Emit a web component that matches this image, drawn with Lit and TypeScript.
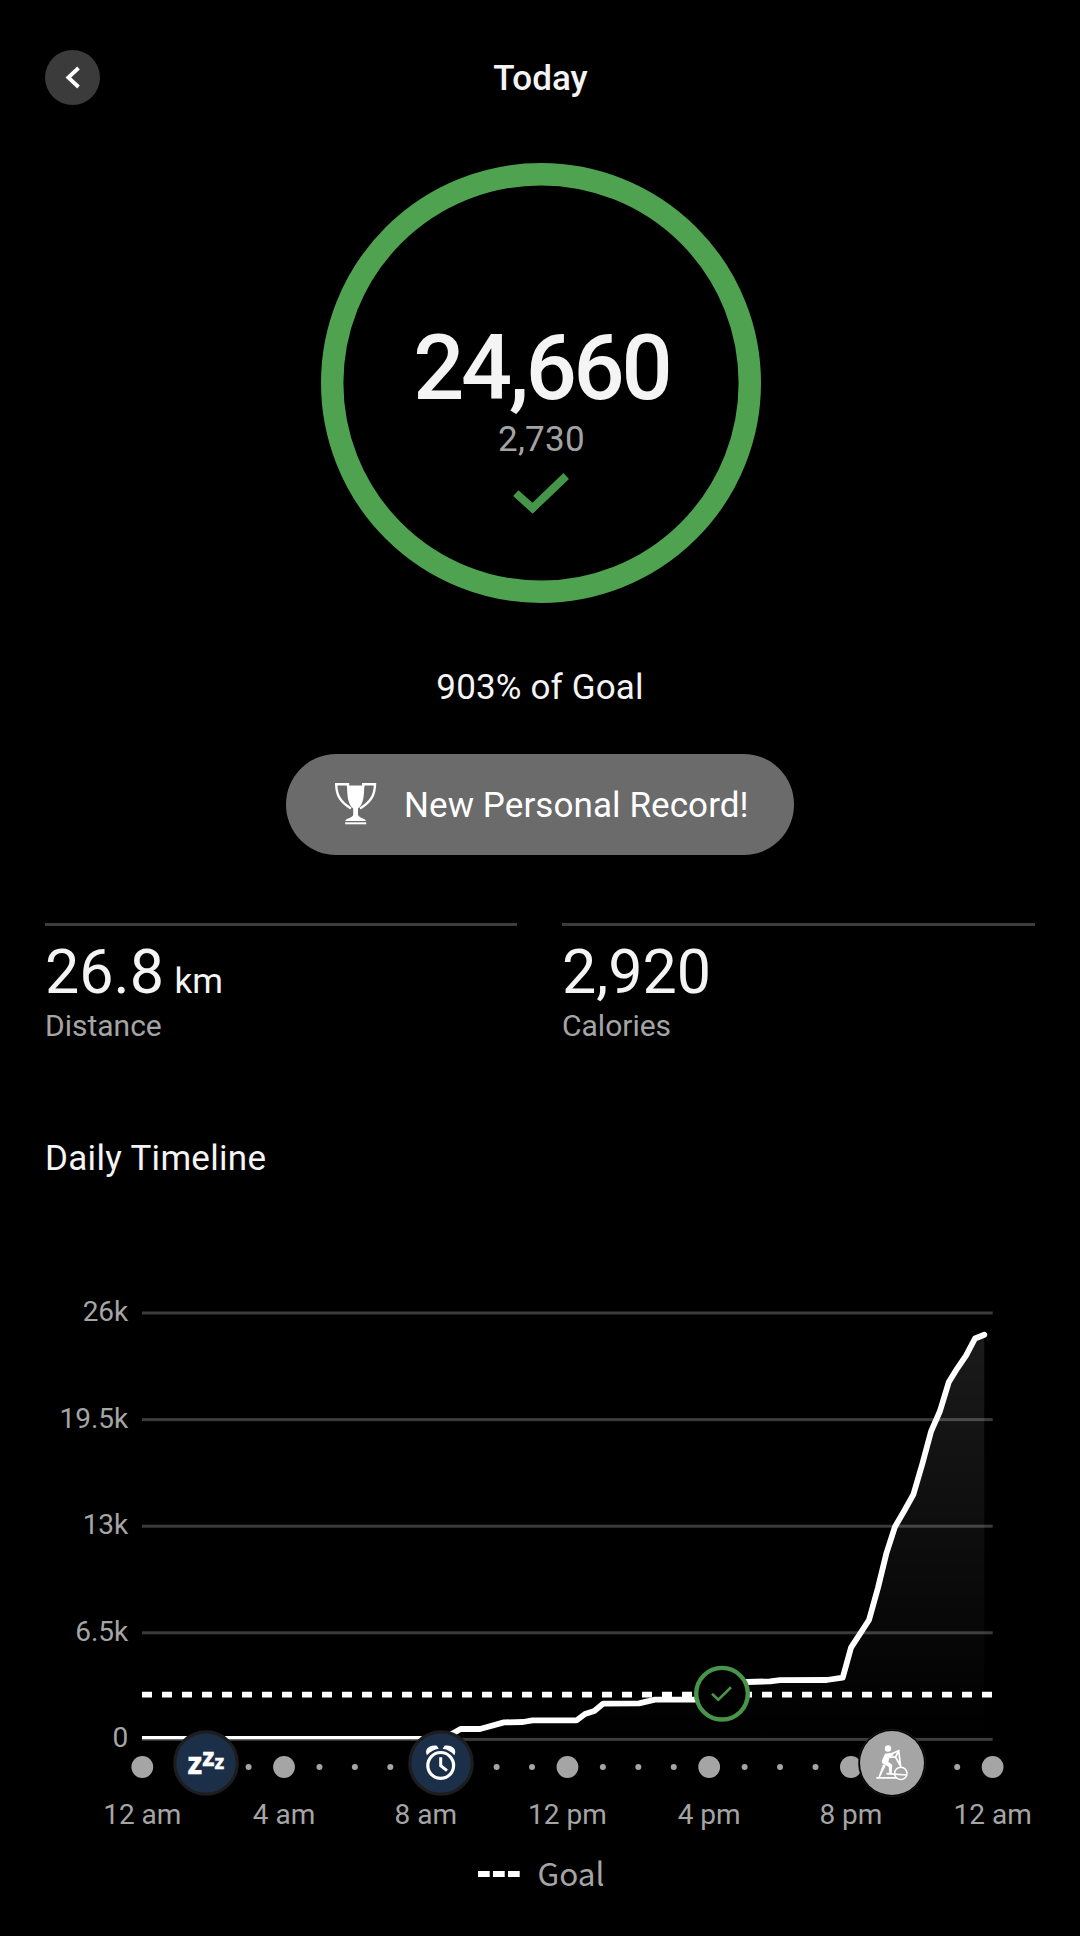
import { LitElement, html, svg, css } from "lit";
import { customElement } from "lit/decorators.js";

const STEP = 35.43;
const LEFT = 142.3;
const GRID = [1313, 1419.6, 1526.2, 1632.8, 1739.4];
const Y_LABELS = ["26k", "19.5k", "13k", "6.5k", "0"];
const X_LABELS = ["12 am", "4 am", "8 am", "12 pm", "4 pm", "8 pm", "12 am"];
const TOP = 1290;

/* Cumulative step curve, as x/y pairs in page units. */
const CURVE: [number, number][] = [
  [142, 1739], [443, 1739], [461, 1728.8], [480, 1729], [504, 1722.4], [523, 1722],
  [532.5, 1720.3], [576.7, 1720.3], [585, 1714], [594.3, 1711], [603.3, 1703.6],
  [639, 1703.3], [655, 1699.7], [704, 1699.7], [722, 1683], [747, 1682], [770, 1681.3],
  [780, 1680.2], [826.7, 1680], [842.7, 1677.7], [851, 1647.7], [869, 1620],
  [878, 1587.7], [886.3, 1553.7], [895, 1526.7], [904, 1511.3], [913.3, 1494.7],
  [922.3, 1464], [931, 1431.7], [940, 1411], [948.7, 1382.3], [957.3, 1368.3],
  [966, 1355.7], [975, 1338.5], [984.3, 1334.7],
];

@customElement("goal-ring")
class GoalRing extends LitElement {
  static styles = css`
    :host { display: grid; width: 440px; height: 440px; }
    .ring, .info { grid-area: 1 / 1; }
    .info { display: flex; flex-direction: column; align-items: center; padding-top: 168px; }
    .steps { font-size: 90px; line-height: 76px; font-weight: 500; letter-spacing: -3.3px; color: #f4f4f4; padding-left: 1.5px; }
    .target { font-size: 35px; line-height: 42px; color: #a3a3a3; margin-top: 12px; letter-spacing: 0.3px; padding-left: 2px; }
    .check { margin-top: 12px; }
  `;
  render() {
    return html`
      <svg class="ring" width="440" height="440" viewBox="0 0 440 440">
        <circle cx="220" cy="220" r="208.8" fill="none" stroke="#4fa350" stroke-width="22.4" />
      </svg>
      <div class="info">
        <div class="steps">24,660</div>
        <div class="target">2,730</div>
        <svg class="check" width="56" height="41" viewBox="0 0 56 41">
          <path d="M2.8 20.1 19.6 35.2 53.2 3" fill="none" stroke="#46964a" stroke-width="8" />
        </svg>
      </div>
    `;
  }
}

@customElement("timeline-chart")
class TimelineChart extends LitElement {
  static styles = css`
    :host { display: block; }
    svg { display: block; }
    text { font-family: Roboto, sans-serif; font-size: 28px; fill: #a5a5a5; }
    .y { text-anchor: end; }
    .x { text-anchor: middle; }
    .z { font-family: "Noto Sans", sans-serif; font-weight: 800; fill: #fff; stroke: #fff; stroke-width: 0.3px; }
    .z1 { font-size: 29.5px; }
    .z2 { font-size: 24.5px; }
    .z3 { font-size: 19.5px; }
  `;
  render() {
    const line = CURVE.map((p) => p.join(",")).join(" ");
    const dots = Array.from({ length: 25 }, (_, i) => i);
    return html`
      <svg width="1080" height="560" viewBox="0 ${TOP} 1080 560">
        <defs>
          <linearGradient id="fade" x1="0" x2="0" y1="1313" y2="1739" gradientUnits="userSpaceOnUse">
            <stop offset="0" stop-color="#fff" stop-opacity="0.11" />
            <stop offset="1" stop-color="#fff" stop-opacity="0" />
          </linearGradient>
          <clipPath id="plot"><rect x="142" y="1300" width="860" height="439.3" /></clipPath>
        </defs>
        ${GRID.map((y, i) => svg`
          <rect x="142" y=${y - 1.5} width="850.7" height="3" fill="#3b3b3b" />
          <text class="y" x="128.3" y=${y + 8}>${Y_LABELS[i]}</text>`)}
        <polygon points="${line} 984.3,1739 142,1739" fill="url(#fade)" />
        <path d="M142 1694.6H992.6" stroke="#fff" stroke-width="5.8" stroke-dasharray="10 10" />
        <polyline points=${line} clip-path="url(#plot)" fill="none" stroke="#fff"
          stroke-width="5.8" stroke-linecap="round" stroke-linejoin="round" />
        ${dots.map((i) => svg`<circle cx=${LEFT + i * STEP} cy="1767" r=${i % 4 ? 3 : 10.9} fill="#a5a5a5" />`)}
        ${X_LABELS.map((t, i) => svg`<text class="x" x=${LEFT + i * 4 * STEP} y="1823.6">${t}</text>`)}

        <g>
          <circle cx="206" cy="1763" r="31.2" fill="#1b3048" stroke="#1d1d1f" stroke-width="3.2" />
          <text class="z z1" x="187.5" y="1774">z</text>
          <text class="z z2" x="202.3" y="1765.8">z</text>
          <text class="z z3" x="214.4" y="1769.3">z</text>
        </g>

        <g fill="none" stroke="#fff">
          <circle cx="441" cy="1763" r="31.2" fill="#1b3048" stroke="#1d1d1f" stroke-width="3.2" />
          <circle cx="440.7" cy="1765.4" r="12.900" stroke-width="3.200" />
          <path d="M440.7 1757.300V1765.800l6.300 4.800" stroke-width="3" />
          <path d="M427 1755.200C423.800 1749.300 429.500 1744.500 436.800 1745.700L438.800 1748.700C433.800 1749.500 430.300 1751.500 427 1755.200ZM454.400 1755.200C457.600 1749.300 451.900 1744.500 444.600 1745.700L442.600 1748.700C447.600 1749.500 451.100 1751.500 454.400 1755.200Z" fill="#fff" stroke="none" />
        </g>

        <g>
          <circle cx="722" cy="1693.700" r="25.800" fill="#000" stroke="#489449" stroke-width="4.400" />
          <path d="M712 1693.700 718.300 1699.700 731 1687.300" fill="none" stroke="#489449" stroke-width="2.600" />
        </g>

        <g fill="none" stroke="#fff">
          <circle cx="892" cy="1763" r="33.600" fill="#000" stroke="#262626" stroke-width="0.600" />
          <circle cx="892" cy="1763" r="32" fill="#a5a5a5" stroke="none" />
          <circle cx="888" cy="1748.500" r="3.200" fill="#fff" stroke="none" />
          <path d="M885 1753.700 892.300 1752.700 893.700 1755 889.700 1757.300 888.300 1761.700 892.300 1765 891.700 1773.300H889.200L888.700 1766.800 882.300 1763.200 881.700 1761Z" fill="#fff" stroke="none" />
          <path d="M883 1764.300 885.800 1765.600 880 1777.300H878.300Z" fill="#fff" stroke="none" />
          <path d="M889.500 1757.200H895.500L898.700 1751M891 1754 898.700 1750.800 900.700 1767M895.700 1757.500 900.300 1765.500" stroke-width="1.700" />
          <path d="M876.300 1777.800H897M886.500 1773.700 906.800 1775" stroke-width="1.700" />
          <circle cx="900.800" cy="1773.400" r="6.200" stroke-width="1.500" />
        </g>
      </svg>
    `;
  }
}

@customElement("app-root")
class AppRoot extends LitElement {
  static styles = css`
    :host { display: block; background: #000; color: #f4f4f4; font-family: Roboto, sans-serif; font-size: 35px; line-height: 42px; }
    .page { height: 1936px; overflow: hidden; display: flex; flex-direction: column; align-items: center; box-sizing: border-box; padding-top: 50px; }
    .bar { display: grid; grid-template-columns: 55px 1fr 55px; align-items: center; height: 55px; width: 990px; }
    .back { display: block; }
    .title { text-align: center; font-weight: 500; padding-top: 3px; padding-left: 1px; }
    goal-ring { margin-top: 58.400px; margin-left: 1px; }
    .percent { margin-top: 63.600px; letter-spacing: 0.150px; }
    .record { margin-top: 45px; width: 508px; height: 100.600px; box-sizing: border-box; border-radius: 50.300px; background: #6b6b6b; color: #fff; display: flex; align-items: center; padding-left: 49px; gap: 27px; letter-spacing: 0.080px; }
    .message { padding-top: 4px; }
    .stats { margin-top: 68.400px; width: 990px; display: grid; grid-template-columns: 472px 473px; gap: 45px; }
    .stat { border-top: 3px solid #3c3c3c; padding-top: 11px; }
    .value { display: flex; align-items: baseline; gap: 10.500px; height: 70px; font-size: 61px; line-height: 70px; }
    .unit { font-size: 35px; line-height: 42px; }
    .label { font-size: 30px; line-height: 34px; color: #a5a5a5; margin-top: 2px; }
    .heading { width: 990px; margin-top: 95px; letter-spacing: 0.300px; }
    timeline-chart { margin-top: 110px; }
    .legend { display: flex; align-items: center; gap: 18px; margin-top: 1px; margin-left: 2px; color: #a5a5a5; }
    .goal { font-family: "Noto Sans CJK SC", sans-serif; font-size: 31.500px; line-height: 46px; margin: -2px 0 2px; }
  `;
  render() {
    return html`
      <main class="page">
        <header class="bar">
          <svg class="back" width="55" height="55" viewBox="0 0 55 55">
            <circle cx="27.500" cy="27.500" r="27.500" fill="#3b3b3b" />
            <path d="M33.500 18 23.300 27.500 33.500 37" fill="none" stroke="#fff" stroke-width="3.800" />
          </svg>
          <div class="title">Today</div>
        </header>
        <goal-ring></goal-ring>
        <div class="percent">903% of Goal</div>
        <div class="record">
          <svg width="42" height="42" viewBox="0 0 42 42">
            <path d="M12 2.500H29.300C29 14 28.500 21 23 25.500V32c2 3.500 7 3 8 6H10.200c1-3 6-2.500 8-6V25.500C12.800 21 12.300 14 12 2.500Z" fill="#fff" />
            <path d="M13 4V1.200H1.200C1.400 12 5 19 16 25.500M28.300 4V1.200H40C39.800 12 36 19 25 25.500" fill="none" stroke="#fff" stroke-width="2.400" />
            <path d="M10.200 40.300H31.200" stroke="#fff" stroke-width="2" />
          </svg>
          <span class="message">New Personal Record!</span>
        </div>
        <section class="stats">
          <div class="stat">
            <div class="value">26.8<span class="unit">km</span></div>
            <div class="label">Distance</div>
          </div>
          <div class="stat">
            <div class="value">2,920</div>
            <div class="label">Calories</div>
          </div>
        </section>
        <div class="heading">Daily Timeline</div>
        <timeline-chart></timeline-chart>
        <div class="legend">
          <svg width="42" height="6" viewBox="0 0 42 6">
            <path d="M0 3H42" stroke="#fff" stroke-width="6" stroke-dasharray="11.700 3.300" />
          </svg>
          <span class="goal">Goal</span>
        </div>
      </main>
    `;
  }
}
